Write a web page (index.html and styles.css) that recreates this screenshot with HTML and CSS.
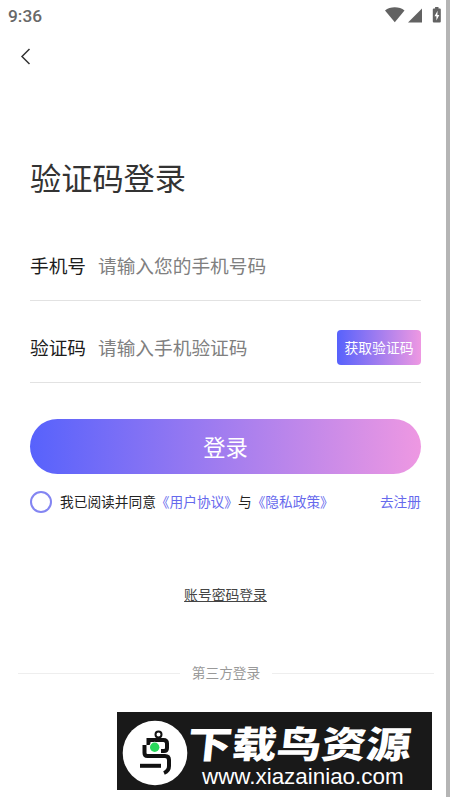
FILE: index.html
```html
<!DOCTYPE html>
<html lang="zh-CN">
<head>
<meta charset="utf-8">
<title>验证码登录</title>
<link rel="stylesheet" href="styles.css">
</head>
<body>
<div class="screen">
  <header class="status">
    <span class="time">9:36</span>
    <svg class="status-icons" width="58" height="20" viewBox="0 0 58 20">
      <path d="M0 5.500C5 1.200 14.500 1.200 19.500 5.500L9.800 17.300Z"/>
      <path d="M37 3.500V17.500H23Z"/>
      <path fill-rule="evenodd" d="M48.800 3.500h1.300V2h3.400v1.500H54.800q1 0 1 1v12q0 1-1 1h-6q-1 0-1-1v-12q0-1 1-1ZM52.600 5.800 49.500 11.300h1.900v4.300l2.900-5.700h-1.900Z"/>
    </svg>
  </header>
  <nav class="nav">
    <svg width="12" height="18" viewBox="0 0 12 18"><path d="M9.500 1 2 8.500l7.500 7.500"/></svg>
  </nav>
  <main class="login">
    <h1 class="title">验证码登录</h1>
    <div class="field">
      <span class="label">手机号</span><span class="hint">请输入您的手机号码</span>
    </div>
    <div class="field field-code">
      <span class="label">验证码</span><span class="hint">请输入手机验证码</span>
      <button class="code">获取验证码</button>
    </div>
    <button class="submit">登录</button>
    <div class="agreement">
      <span class="radio"></span>
      <span class="terms">我已阅读并同意<a>《用户协议》</a>与<a>《隐私政策》</a></span>
      <a class="register">去注册</a>
    </div>
    <a class="password">账号密码登录</a>
  </main>
  <div class="divider"><span>第三方登录</span></div>
  <footer class="banner">
    <svg class="logo" width="66" height="66" viewBox="0 0 66 66">
      <circle cx="33" cy="33" r="32.300" fill="#fff"/>
      <g fill="none" stroke="#111" stroke-width="4">
        <path d="M26.500 25v-5h15q3.500 0 3.500 3.500V28q0 3-3 3h-3"/>
        <path d="M22.500 25v8q0 3 3 3H43q4 0 4 4v6q0 5-5 7"/>
        <path d="M18 45.800h21"/>
        <circle cx="36.500" cy="14.500" r="3" stroke-width="2"/>
      </g>
      <circle cx="32.700" cy="27.300" r="5.600" fill="#fff"/>
      <circle cx="32.700" cy="27.300" r="4.700" fill="#28d95b"/>
    </svg>
    <div class="brand">
      <strong>下载鸟资源</strong>
      <span>www.xiazainiao.com</span>
    </div>
  </footer>
</div>
</body>
</html>
```
FILE: styles.css
```css
* { box-sizing: border-box; }
body {
  margin: 0;
  background: #fff;
  font-family: "Noto Sans CJK SC", sans-serif;
  color: #222;
}
.screen {
  width: 450px;
  height: 797px;
  border-right: 4px solid #b5b5b5;
  overflow: hidden;
}
.status {
  height: 32px;
  padding: 0 3px 0 8px;
  display: flex;
  justify-content: space-between;
  align-items: center;
}
.time {
  font: 500 17.300px/32px Roboto, sans-serif;
  color: #686868;
}
.status-icons { margin-top: -2px; fill: #626262; }
.nav {
  height: 50px;
  padding: 0 20px;
  display: flex;
  align-items: center;
}
.nav svg { fill: none; stroke: #333; stroke-width: 1.500; }
.login {
  padding: 72px 25px 0 30px;
  display: flex;
  flex-direction: column;
}
.title {
  margin: 0;
  height: 46px;
  font-size: 31.200px;
  line-height: 46px;
  font-weight: 400;
  color: #333;
}
.field {
  height: 101px;
  padding-top: 29px;
  display: flex;
  align-items: center;
  border-bottom: 1px solid #e2e2e2;
  font-size: 18.700px;
}
.field-code { height: 82px; padding-top: 12px; }
.field-code .label, .field-code .hint { margin-top: -2px; }
.label { width: 68px; color: #1c1c1c; }
.hint { color: #808080; }
button {
  border: 0;
  padding: 0 0 2px;
  color: #fff;
  font-family: inherit;
  background: linear-gradient(90deg, #5762fc, #ee98e2);
}
.code {
  width: 84px;
  height: 35px;
  margin-left: auto;
  border-radius: 4px;
  font-size: 13.800px;
}
.submit {
  height: 55px;
  margin-top: 36px;
  border-radius: 28px;
  font-size: 22.300px;
}
.agreement {
  height: 56px;
  display: flex;
  align-items: center;
  font-size: 13.700px;
}
.terms, .register { margin-top: -2px; }
.radio {
  width: 22px;
  height: 22px;
  margin-right: 8px;
  border: 2px solid #8385f2;
  border-radius: 50%;
}
.agreement a { color: #6669ed; }
.register { margin-left: auto; }
.password {
  align-self: center;
  margin-top: 54px;
  line-height: 20px;
  font-size: 13.800px;
  color: #444;
  text-decoration: underline;
}
.divider {
  margin: 59px 12px 0 18px;
  height: 20px;
  display: flex;
  align-items: center;
  gap: 12px;
  font-size: 13.700px;
  color: #999;
}
.divider span { margin-top: -2px; }
.divider::before, .divider::after {
  content: "";
  flex: 1;
  height: 1px;
  background: #eee;
}
.banner {
  width: 315px;
  height: 78px;
  margin: 29px 0 0 117px;
  padding-left: 5px;
  display: flex;
  align-items: center;
  background: #191919;
  color: #fff;
}
.logo { flex: none; margin-top: 3px; }
.brand {
  height: 78px;
  display: flex;
  flex-direction: column;
  white-space: nowrap;
}
.brand strong {
  height: 54px;
  padding-top: 5px;
  font-size: 37px;
  line-height: 50px;
  font-weight: 900;
  transform: skewX(-6deg) scaleX(1.210);
  transform-origin: 0 50%;
}
.brand span {
  padding-left: 14px;
  font: 22.400px/22px "Liberation Sans", sans-serif;
  transform: scaleY(.95);
}
```
